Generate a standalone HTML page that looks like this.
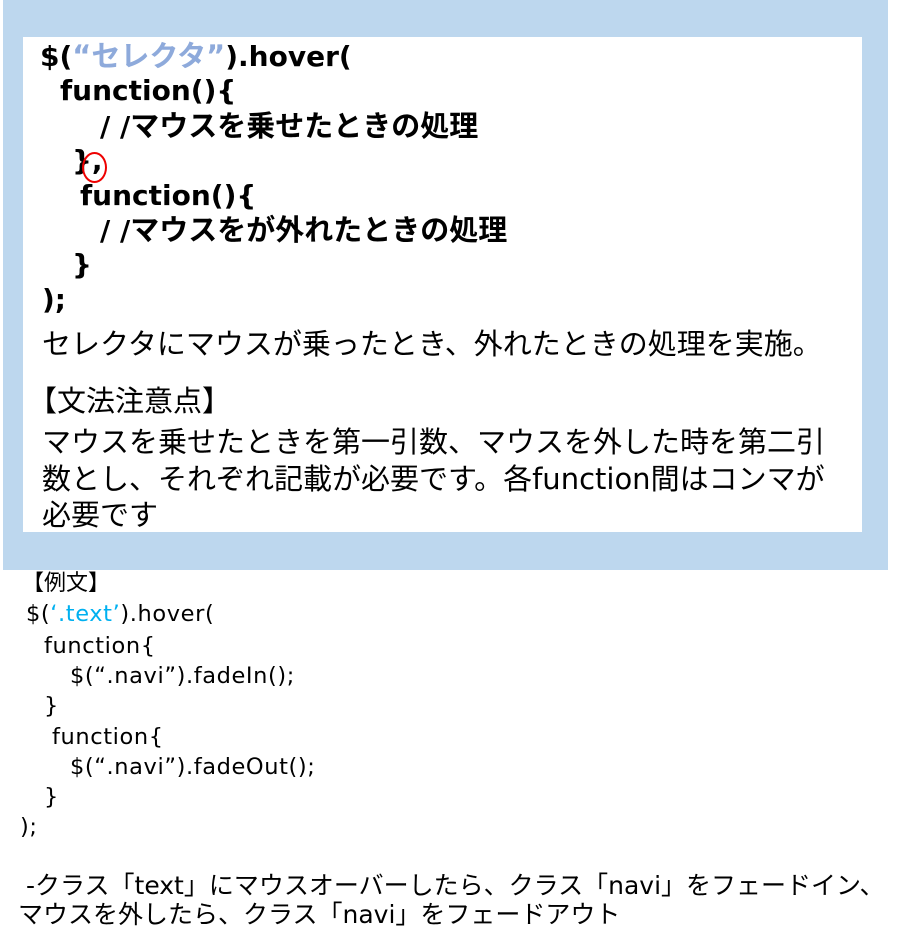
<!DOCTYPE html>
<html><head><meta charset="utf-8"><style>
body{margin:0;width:899px;height:951px;background:#fff;position:relative;overflow:hidden;font-family:"DejaVu Sans","Noto Sans CJK JP",sans-serif;color:#000}
.blue{position:absolute;left:3px;top:0;width:885px;height:570px;background:#bdd7ee}
.white{position:absolute;left:23px;top:37px;width:839px;height:495px;background:#fff}
.l{position:absolute;white-space:nowrap;line-height:1}
.b{font-weight:bold;font-size:28px}
.b .j{font-size:29px}
.n{font-size:29px}
.s{font-size:22.5px;letter-spacing:0.6px}
.t{font-size:25px}
</style></head><body>
<div class="blue"></div><div class="white"></div>
<div class="l b" style="left:40px;top:42px">$(<span class="j" style="color:#8eaadb">“セレクタ”</span>).hover(</div>
<div class="l b" style="left:60px;top:77px">function(){</div>
<div class="l b" style="left:100px;top:112px">/ /<span class="j">マウスを乗せたときの処理</span></div>
<div class="l b" style="left:72px;top:147px">},</div>
<div style="position:absolute;left:82px;top:152px;width:25px;height:31px;border:2px solid #e00;border-radius:50%;box-sizing:border-box"></div>
<div class="l b" style="left:80px;top:182px">function(){</div>
<div class="l b" style="left:100px;top:216px">/ /<span class="j">マウスをが外れたときの処理</span></div>
<div class="l b" style="left:72px;top:251px">}</div>
<div class="l b" style="left:42px;top:286px">);</div>
<div class="l n" style="left:42px;top:330px">セレクタにマウスが乗ったとき、外れたときの処理を実施。</div>
<div class="l n" style="left:28px;top:387px">【文法注意点】</div>
<div class="l n" style="left:42px;top:428px">マウスを乗せたときを第一引数、マウスを外した時を第二引</div>
<div class="l n" style="left:42px;top:465px">数とし、それぞれ記載が必要です。各function間はコンマが</div>
<div class="l n" style="left:42px;top:501px">必要です</div>
<div class="l" style="left:22px;top:573px;font-size:22px">【例文】</div>
<div class="l s" style="left:26px;top:603px">$(<span style="color:#00b0f0">‘.text’</span>).hover(</div>
<div class="l s" style="left:44px;top:635px">function{</div>
<div class="l s" style="left:70px;top:665px">$(“.navi”).fadeIn();</div>
<div class="l s" style="left:44px;top:695px">}</div>
<div class="l s" style="left:52px;top:726px">function{</div>
<div class="l s" style="left:70px;top:756px">$(“.navi”).fadeOut();</div>
<div class="l s" style="left:44px;top:786px">}</div>
<div class="l s" style="left:20px;top:816px">);</div>
<div class="l t" style="left:26px;top:873px">-クラス「text」にマウスオーバーしたら、クラス「navi」をフェードイン、</div>
<div class="l t" style="left:18px;top:902px">マウスを外したら、クラス「navi」をフェードアウト</div>
</body></html>
